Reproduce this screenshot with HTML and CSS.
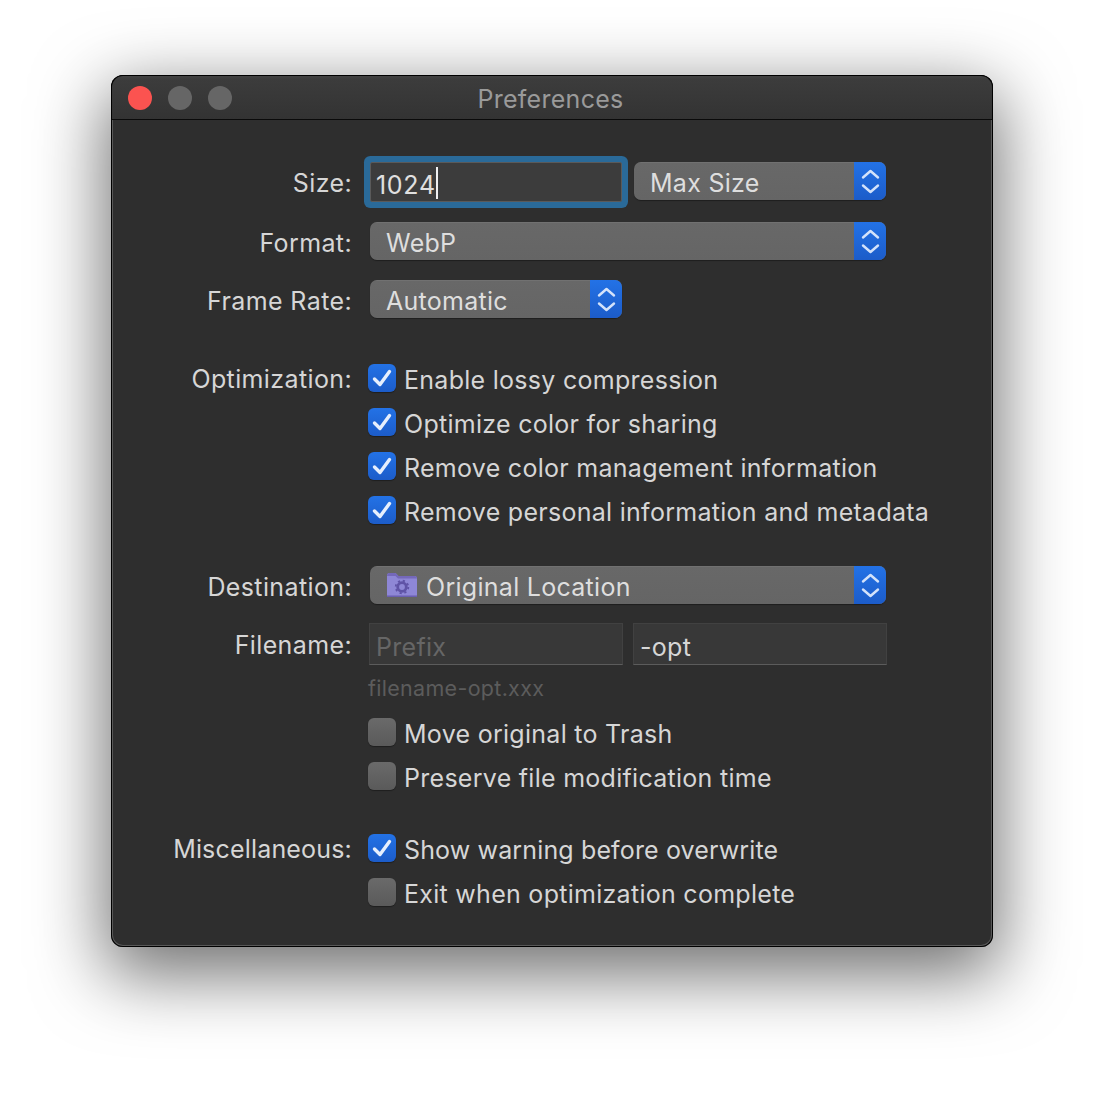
FILE: index.html
```html
<!DOCTYPE html>
<html lang="en">
<head>
<meta charset="utf-8">
<title>Preferences</title>
<link rel="stylesheet" href="styles.css">
</head>
<body>
<svg class="defs" width="0" height="0" aria-hidden="true">
  <symbol id="chev" viewBox="0 0 32 38">
    <path d="M9 15.500 16.500 9l7.500 6.500M9 23.500 16.500 30l7.500-6.500" fill="none" stroke="#d3e2fa" stroke-width="2.400" stroke-linecap="round" stroke-linejoin="round"/>
  </symbol>
  <symbol id="tick" viewBox="0 0 28 28">
    <path d="M6.500 15 12 20.500 21.500 7.500" fill="none" stroke="#e6effd" stroke-width="3.400" stroke-linecap="round" stroke-linejoin="round"/>
  </symbol>
</svg>
<main class="window">
  <header class="titlebar">
    <div class="lights">
      <span class="light close"></span>
      <span class="light"></span>
      <span class="light"></span>
    </div>
    <h1 class="title">Preferences</h1>
  </header>
  <form class="prefs">
    <div class="row">
      <span class="label">Size:</span>
      <div class="pair">
        <div class="input focused"><span class="num">1024</span><span class="caret"></span></div>
        <div class="select half2"><span class="value">Max Size</span><span class="stepper"><svg class="chev"><use href="#chev"/></svg></span></div>
      </div>
    </div>
    <div class="row mt20">
      <span class="label">Format:</span>
      <div class="select full"><span class="value">WebP</span><span class="stepper"><svg class="chev"><use href="#chev"/></svg></span></div>
    </div>
    <div class="row mt20">
      <span class="label">Frame Rate:</span>
      <div class="select half"><span class="value">Automatic</span><span class="stepper"><svg class="chev"><use href="#chev"/></svg></span></div>
    </div>

    <div class="row mt46">
      <span class="label label-check">Optimization:</span>
      <div class="checks">
        <div class="check"><span class="box on"><svg class="tick"><use href="#tick"/></svg></span><span class="text">Enable lossy compression</span></div>
        <div class="check"><span class="box on"><svg class="tick"><use href="#tick"/></svg></span><span class="text">Optimize color for sharing</span></div>
        <div class="check"><span class="box on"><svg class="tick"><use href="#tick"/></svg></span><span class="text">Remove color management information</span></div>
        <div class="check"><span class="box on"><svg class="tick"><use href="#tick"/></svg></span><span class="text">Remove personal information and metadata</span></div>
      </div>
    </div>

    <div class="row mt42">
      <span class="label">Destination:</span>
      <div class="select full">
        <svg class="folder" viewBox="0 0 30 24" aria-hidden="true">
          <path d="M0 3Q0 0 2.500 0H8.500l3 3h16Q30 3 30 5.500V22.500q0 1.500-2 1.500H2q-2 0-2-1.500z" fill="#8e87d6"/>
          <path d="M0 3Q0 0 2.500 0H8.500l3 3h16Q30 3 30 5.500H11L8.500 3H0z" fill="#7468ba"/>
          <rect y="22.500" width="30" height="1.500" fill="#6a5fb0"/>
          <circle cx="15" cy="14" r="4.300" fill="none" stroke="#5f53a6" stroke-width="2.800"/>
          <circle cx="15" cy="14" r="6.300" fill="none" stroke="#5f53a6" stroke-width="1.800" stroke-dasharray="2.200 2.750"/>
        </svg>
        <span class="value">Original Location</span>
        <span class="stepper"><svg class="chev"><use href="#chev"/></svg></span>
      </div>
    </div>
    <div class="row mt19">
      <span class="label label-name">Filename:</span>
      <div class="names">
        <div class="flat placeholder">Prefix</div>
        <div class="flat">-opt</div>
      </div>
    </div>
    <div class="row mt12">
      <span class="spacer"></span>
      <span class="hint">filename-opt.xxx</span>
    </div>
    <div class="row mt17">
      <span class="spacer"></span>
      <div class="checks">
        <div class="check"><span class="box"></span><span class="text">Move original to Trash</span></div>
        <div class="check"><span class="box"></span><span class="text">Preserve file modification time</span></div>
      </div>
    </div>

    <div class="row mt44">
      <span class="label label-check label-tight">Miscellaneous:</span>
      <div class="checks">
        <div class="check"><span class="box on"><svg class="tick"><use href="#tick"/></svg></span><span class="text text-tight">Show warning before overwrite</span></div>
        <div class="check"><span class="box"></span><span class="text">Exit when optimization complete</span></div>
      </div>
    </div>
  </form>
</main>
</body>
</html>
```

FILE: styles.css
```css
* { box-sizing: border-box; }

html, body { margin: 0; padding: 0; }

body {
  width: 1104px;
  height: 1094px;
  padding: 75px 111px 0;
  background: #fff;
  overflow: hidden;
  font-family: Inter, "Liberation Sans", sans-serif;
  font-size: 25px;
  line-height: 30px;
  letter-spacing: .28px;
  color: #d6d6d6;
}

.defs { position: absolute; }

.window {
  width: 882px;
  height: 872px;
  border-radius: 12px;
  background: #2e2e2e;
  box-shadow:
    0 0 0 1px #000 inset,
    0 0 0 2px #585858 inset,
    0 22px 70px 6px rgba(0, 0, 0, .56);
  overflow: hidden;
}

.titlebar {
  height: 45px;
  display: flex;
  align-items: center;
  position: relative;
  background: linear-gradient(#434343 0, #3c3c3c 3px, #333 100%);
  border: 1px solid #000;
  border-bottom: 1px solid #0a0a0a;
  border-radius: 12px 12px 0 0;
}

.lights {
  display: flex;
  gap: 16px;
  padding-left: 16px;
}

.light {
  width: 24px;
  height: 24px;
  border-radius: 50%;
  background: #666;
}

.light.close { background: #fb5350; }

.title {
  position: absolute;
  left: -3px;
  right: 0;
  top: 8px;
  margin: 0;
  text-align: center;
  font-size: 25px;
  font-weight: 400;
  line-height: 30px;
  color: #9a9a9a;
}

.prefs {
  display: flex;
  flex-direction: column;
  padding-top: 42px;
}

.row {
  display: grid;
  grid-template-columns: 241px 1fr;
  column-gap: 16px;
  align-items: start;
}

.mt12 { margin-top: 12px; }
.mt17 { margin-top: 17px; }
.mt19 { margin-top: 19px; }
.mt20 { margin-top: 20px; }
.mt42 { margin-top: 42px; }
.mt44 { margin-top: 44px; }
.mt46 { margin-top: 46px; }

.label {
  height: 38px;
  text-align: right;
  line-height: 42px;
  letter-spacing: .38px;
  white-space: nowrap;
}

.label-check { line-height: 30px; }
.label-name { line-height: 44px; }
.label-tight { letter-spacing: .18px; }

.pair {
  display: flex;
  gap: 12px;
  margin-left: 2px;
}

.input {
  width: 252px;
  height: 40px;
  display: flex;
  align-items: center;
  padding: 5px 0 0 5px;
  background: #3c3c3c;
  border: 1px solid #5a5a5a;
  color: #e0e0e0;
}

.input.focused {
  border-radius: 2px;
  box-shadow: 0 0 0 6px #2a6a99;
}

.num { letter-spacing: .7px; }

.caret {
  width: 2px;
  height: 32px;
  margin-top: -4px;
  background: #f0f0f0;
}

.select {
  height: 38px;
  display: flex;
  align-items: center;
  border-radius: 7px;
  background: linear-gradient(#7a7a7a 0, #686868 1px, #656565 100%);
  box-shadow: 0 1px 1px rgba(0, 0, 0, .35);
  overflow: hidden;
  color: #dedede;
}

.select.full { width: 516px; margin-left: 2px; }
.select.half { width: 252px; margin-left: 2px; }
.select.half2 { width: 252px; }

.value {
  flex: 1;
  padding: 4px 0 0 16px;
  white-space: nowrap;
}

.folder {
  width: 30px;
  height: 24px;
  margin-left: 17px;
  flex: none;
}

.folder + .value { padding-left: 9px; }

.stepper {
  width: 32px;
  height: 38px;
  flex: none;
  display: block;
  background: linear-gradient(#2372e6, #1c5cc9);
}

.chev {
  display: block;
  width: 32px;
  height: 38px;
}

.checks {
  display: flex;
  flex-direction: column;
  gap: 16px;
}

.check {
  display: flex;
  align-items: center;
  height: 28px;
  gap: 8px;
  white-space: nowrap;
}

.text { padding-top: 4px; }
.text-tight { letter-spacing: .14px; }

.box {
  width: 28px;
  height: 28px;
  flex: none;
  border-radius: 6px;
  background: linear-gradient(#6a6a6a, #5a5a5a);
  box-shadow: 0 1px 1px rgba(0, 0, 0, .35);
}

.box.on { background: linear-gradient(#2372e6, #1c5cc9); }

.tick {
  display: block;
  width: 28px;
  height: 28px;
}

.names {
  display: flex;
  gap: 10px;
  margin-left: 1px;
}

.flat {
  width: 254px;
  height: 42px;
  padding: 8px 0 0 6px;
  background: #383838;
  border: 1px solid #414141;
  border-bottom: 1px solid #5c5c5c;
  color: #d6d6d6;
}

.flat.placeholder { color: #666; }

.hint {
  height: 24px;
  font-size: 21.500px;
  line-height: 22px;
  letter-spacing: .3px;
  color: #5c5c5c;
}
```
